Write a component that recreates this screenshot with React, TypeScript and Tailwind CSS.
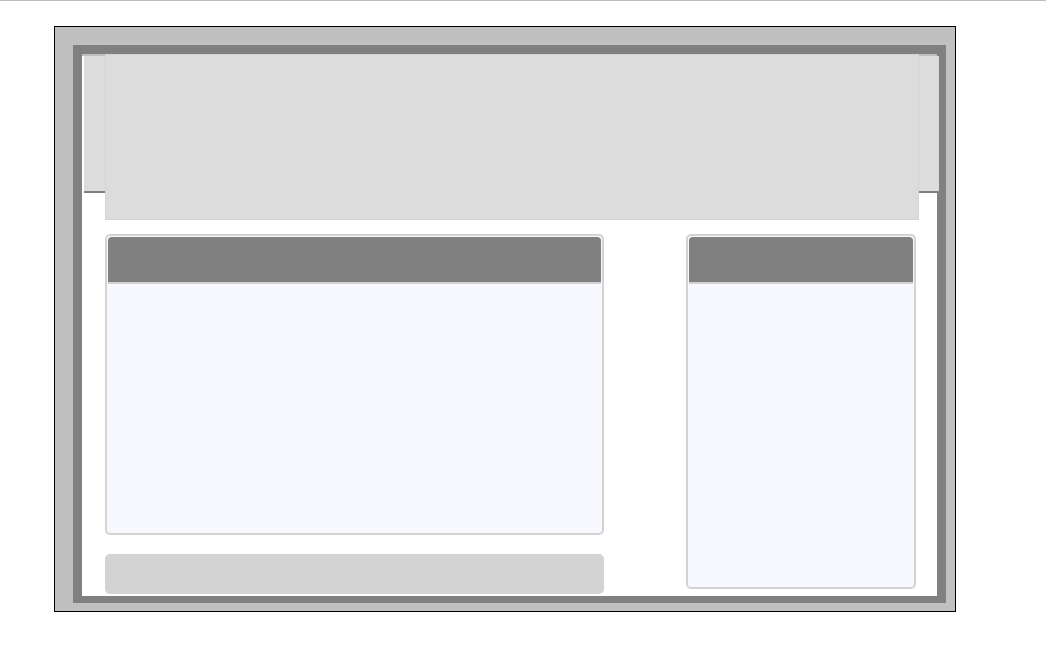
export default function App() {
  return (
    <div className="min-h-[659px] w-full border-t border-[#bfbfbf] bg-white pt-[25px] pl-[54px]">
      {/* Outer frame */}
      <div className="h-[586px] w-[902px] border border-black bg-[#c0c0c0] pt-[18px] pl-[18px] pr-[9px] pb-[8px]">
        <div className="h-full w-full border-[9px] border-[#808080]">
          <div className="h-full w-full bg-white">
            {/* Header band */}
            <div className="ml-[2px] mt-[2px] h-[137px] w-[855px] border-b-2 border-[#808080] bg-[#dcdcdc]" />

            {/* Content */}
            <div className="relative -mt-[139px] pl-[23px]">
              <div className="h-[166px] w-[814px] border border-[#d3d3d3] bg-[#dcdcdc]" />

              <div className="mt-[14px] flex items-start">
                <div className="flex w-[499px] flex-col">
                  <div className="h-[301px] rounded-[5px] border-2 border-[#d3d3d3] bg-[#f8f8ff]">
                    <div className="m-px h-[47px] rounded-t-[4px] border-b-2 border-[#d3d3d3] bg-[#808080]" />
                  </div>
                  <div className="mt-[19px] h-[40px] w-[499px] rounded-[5px] bg-[#d3d3d3]" />
                </div>

                <div className="ml-[82px] h-[355px] w-[230px] rounded-[5px] border-2 border-[#d3d3d3] bg-[#f8f8ff]">
                  <div className="m-px h-[47px] rounded-t-[4px] border-b-2 border-[#d3d3d3] bg-[#808080]" />
                </div>
              </div>
            </div>
          </div>
        </div>
      </div>
    </div>
  );
}
